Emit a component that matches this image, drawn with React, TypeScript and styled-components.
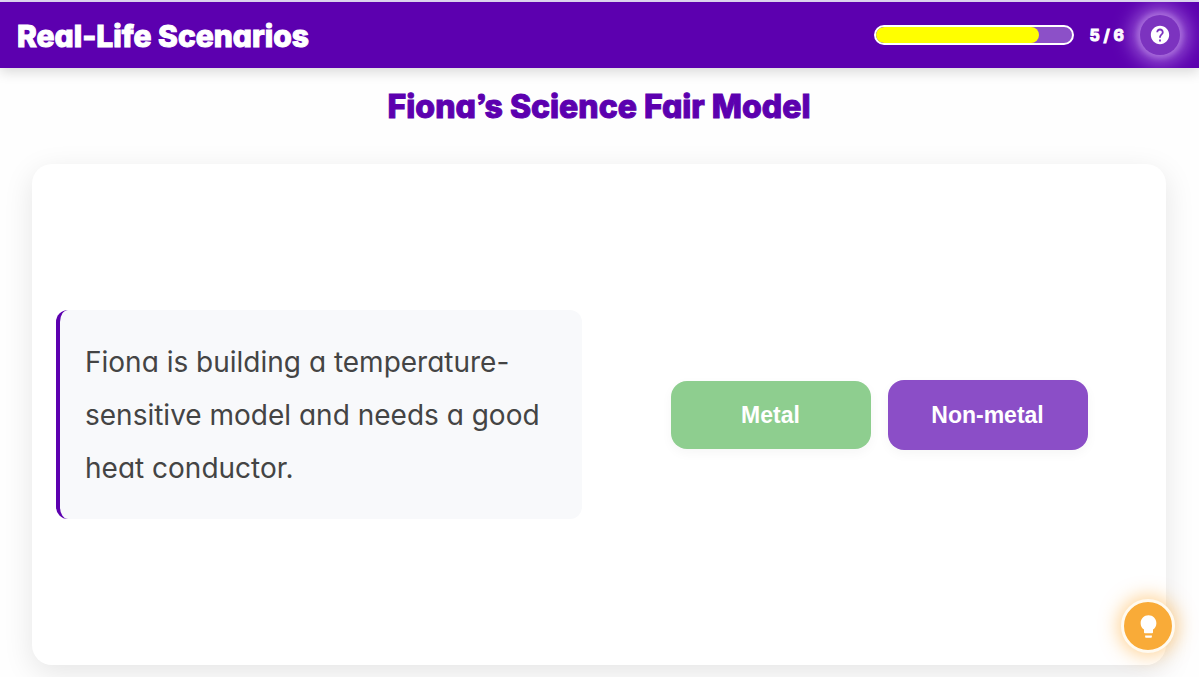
import React from "react";
import styled, { createGlobalStyle } from "styled-components";
import { MdHelp, MdLightbulb } from "react-icons/md";

const GlobalStyle = createGlobalStyle`
  * { box-sizing: border-box; }
  body {
    margin: 0;
    background: #fefefe;
    font-family: Inter, "Liberation Sans", sans-serif;
    font-feature-settings: "cv11", "ss03";
  }
`;

const Page = styled.div`
  display: flex;
  flex-direction: column;
  min-height: 100vh;
  border-top: 2px solid #e2daf5;
`;

const Header = styled.header`
  display: flex;
  align-items: center;
  justify-content: space-between;
  height: 66px;
  padding: 0 19px 0 17px;
  overflow: hidden;
  background: #5c00af;
  color: #fff;
  box-shadow: 0 4px 12px rgba(0, 0, 0, 0.15);
`;

const AppTitle = styled.h1`
  margin: 0;
  padding-top: 2px;
  font-size: 30px;
  line-height: 36px;
  font-weight: 800;
  -webkit-text-stroke: 1px currentColor;
`;

const Status = styled.div`
  display: flex;
  align-items: center;
  gap: 16px;
`;

const Track = styled.div`
  width: 200px;
  height: 20px;
  border: 2px solid #fff;
  border-radius: 10px;
  background: #8c50c8;
  overflow: hidden;
`;

const Fill = styled.div`
  height: 100%;
  border-radius: 8px;
  background: #ff0;
`;

const Counter = styled.span`
  font-size: 16px;
  line-height: 20px;
  font-weight: 700;
  -webkit-text-stroke: 1px currentColor;
`;

const HelpButton = styled.button`
  display: grid;
  place-items: center;
  width: 40px;
  height: 40px;
  padding: 0;
  border: 0;
  border-radius: 50%;
  background: #7c33bf;
  color: #fff;
  font-size: 22px;
  box-shadow: 0 0 5px 3px rgba(180, 125, 225, 0.6), 0 0 20px 8px rgba(190, 140, 235, 0.75);
`;

const Main = styled.main`
  display: flex;
  flex: 1;
  flex-direction: column;
  padding: 16px 33px 12px 32px;
`;

const Title = styled.h2`
  margin: 0 0 34px;
  color: #5c00af;
  font-size: 32px;
  line-height: 46px;
  font-weight: 800;
  text-align: center;
  -webkit-text-stroke: 1px currentColor;
`;

const Card = styled.section`
  display: grid;
  flex: 1;
  grid-template-columns: 1fr 1fr;
  align-items: center;
  gap: 34px;
  padding: 24px;
  border-radius: 20px;
  background: #fff;
  box-shadow: 0 8px 30px rgba(0, 0, 0, 0.1);
`;

const Scenario = styled.p`
  margin: 0;
  padding: 26px 25px 24px;
  border-left: 4px solid #5c00af;
  border-radius: 12px;
  background: #f8f9fb;
  color: #444;
  font-size: 28px;
  line-height: 53px;
`;

const Choices = styled.div`
  display: flex;
  align-items: center;
  justify-content: center;
  gap: 17px;
`;

const Choice = styled.button<{ $tone: "green" | "purple" }>`
  width: 200px;
  padding: ${(p) => (p.$tone === "green" ? 19 : 20)}px 16px;
  border: 0;
  border-radius: 16px;
  background: ${(p) => (p.$tone === "green" ? "#8ece8f" : "#8b4ec7")};
  color: #fff;
  font-family: "Liberation Sans", Arial, sans-serif;
  font-size: 23px;
  line-height: 30px;
  font-weight: 700;
  box-shadow: 0 4px 12px rgba(0, 0, 0, 0.04);
`;

const HintButton = styled.button`
  position: fixed;
  right: 24px;
  bottom: 24px;
  display: grid;
  place-items: center;
  width: 54px;
  height: 54px;
  padding: 0;
  border: 3px solid #fffaf0;
  border-radius: 50%;
  background: #f9ab38;
  color: #fff;
  font-size: 27px;
  box-shadow: 0 0 18px 3px rgba(255, 170, 50, 0.5);
`;

export default function App() {
  const current = 5;
  const total = 6;
  return (
    <>
      <GlobalStyle />
      <Page>
        <Header>
          <AppTitle>Real-Life Scenarios</AppTitle>
          <Status>
            <Track role="progressbar" aria-label="Progress" aria-valuenow={current} aria-valuemin={0} aria-valuemax={total}>
              <Fill style={{ width: `${(current / total) * 100}%` }} />
            </Track>
            <Counter>{`${current} / ${total}`}</Counter>
            <HelpButton type="button" aria-label="Help"><MdHelp /></HelpButton>
          </Status>
        </Header>
        <Main>
          <Title>Fiona’s Science Fair Model</Title>
          <Card>
            <Scenario>Fiona is building a temperature-sensitive model and needs a good heat conductor.</Scenario>
            <Choices>
              <Choice type="button" $tone="green">Metal</Choice>
              <Choice type="button" $tone="purple">Non-metal</Choice>
            </Choices>
          </Card>
        </Main>
        <HintButton type="button" aria-label="Hint"><MdLightbulb /></HintButton>
      </Page>
    </>
  );
}
